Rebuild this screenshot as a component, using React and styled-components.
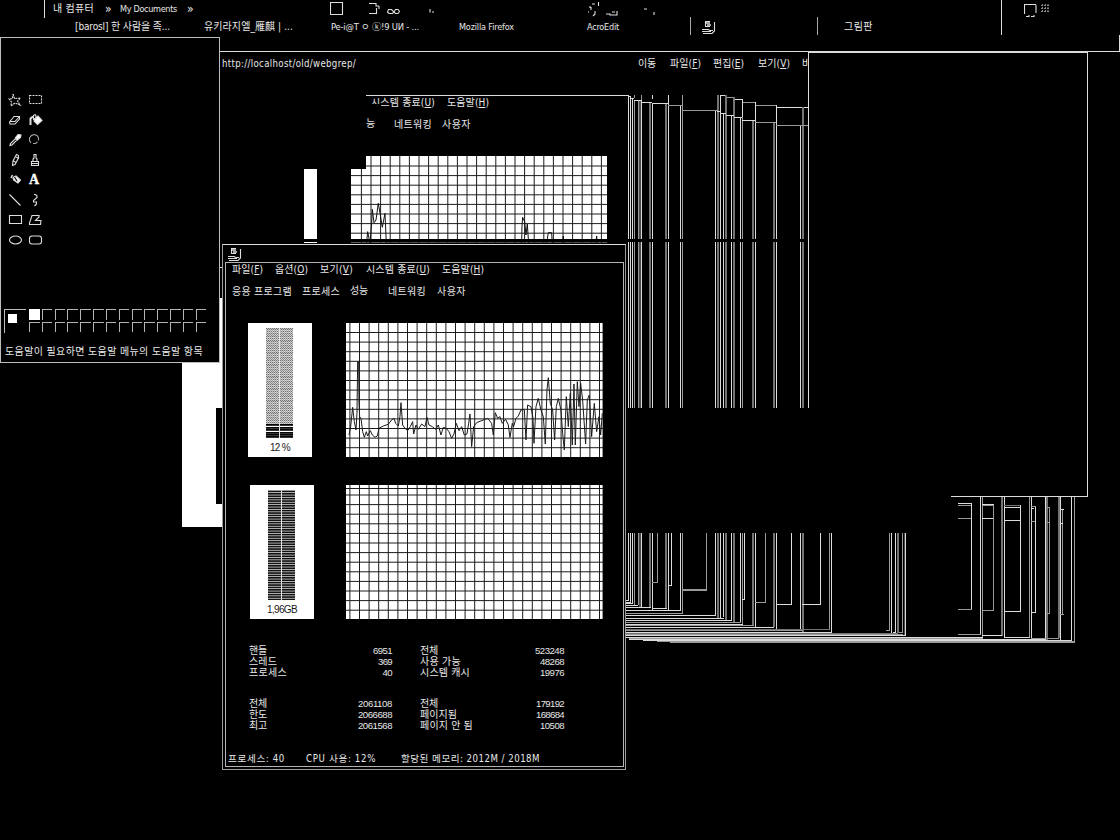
import React, { useLayoutEffect, useRef } from "react";
import styled, { createGlobalStyle } from "styled-components";

const LIGHT = "#dcdcdc";

const GlobalStyle = createGlobalStyle`
  html, body { margin: 0; background: #000; overflow: hidden; }
  * { box-sizing: border-box; }
`;

const Desktop = styled.main`
  position: relative;
  width: 1120px;
  height: 840px;
  overflow: hidden;
  background: #000;
  color: #e8e8e8;
  font-family: "DejaVu Sans Condensed", "DejaVu Sans", "Noto Sans CJK KR", sans-serif;
  font-size: 10px;
  line-height: 14px;
`;

const LabelBox = styled.span`
  display: block;
  flex: none;
  width: ${(p) => p.$w}px;
  height: 14px;
  margin-left: ${(p) => p.$gap || 0}px;
  white-space: pre;
  font-size: ${(p) => p.$size || 10}px;
  font-family: ${(p) => (p.$narrow ? '"Liberation Sans Narrow", "Liberation Sans", "Noto Sans CJK KR", sans-serif' : "inherit")};
  u { text-decoration: underline; text-underline-offset: 1px; text-decoration-thickness: 1px; }
`;

/* A caption that spreads its letters over a fixed width, like a bitmap face. */
function Label({ w, gap, size, narrow, children }) {
  const inner = useRef(null);
  useLayoutEffect(() => {
    const el = inner.current;
    el.style.letterSpacing = "0px";
    const natural = el.getBoundingClientRect().width;
    const count = Array.from(el.textContent).length;
    el.style.letterSpacing = `${(w - natural) / count}px`;
  });
  return (
    <LabelBox $w={w} $gap={gap} $size={size} $narrow={narrow}>
      <span ref={inner}>{children}</span>
    </LabelBox>
  );
}

const TopBar = styled.header`
  display: flex;
  height: 35px;
`;
const BarColumn = styled.div`
  width: ${(p) => p.$w}px;
  height: 35px;
  border-left: ${(p) => (p.$line ? `1px solid ${LIGHT}` : "0")};
`;
const BarRow = styled.div`
  display: flex;
  align-items: flex-start;
  height: ${(p) => p.$h || 18}px;
  padding: ${(p) => p.$top || 0}px 0 0 ${(p) => p.$left || 0}px;
`;
const Divider = styled.i`
  display: block;
  flex: none;
  width: 1px;
  height: ${(p) => p.$h}px;
  margin-left: ${(p) => p.$gap || 0}px;
  background: ${(p) => p.$c || "#a8a8a8"};
`;
const Icon = styled.svg`
  display: block;
  flex: none;
  width: ${(p) => p.$w}px;
  height: ${(p) => p.$h}px;
  margin-left: ${(p) => p.$gap || 0}px;
  fill: none;
  stroke: #dedede;
  stroke-width: 1.1;
`;

const Trails = styled.svg`
  position: absolute;
  inset: 0;
  width: 1120px;
  height: 840px;
`;

const Frame = styled.section`
  position: absolute;
  left: ${(p) => p.$x}px;
  top: ${(p) => p.$y}px;
  width: ${(p) => p.$w}px;
  height: ${(p) => p.$h}px;
`;
const Browser = styled(Frame)`
  border-top: 1px solid ${LIGHT};
`;
const AddressRow = styled.div`
  display: flex;
  padding: 5px 0 0 2px;
`;
const BlankWindow = styled(Frame)`
  background: #000;
  border: solid ${LIGHT};
  border-width: 1px 1px 0 1px;
`;
const PaintWindow = styled(Frame)`
  display: flex;
  flex-direction: column;
  background: #000;
  border: 1px solid #bdbdbd;
`;
const Toolbox = styled.div`
  display: grid;
  grid-template-columns: repeat(2, 20px);
  grid-auto-rows: 20px;
  padding: 52px 0 0 4px;
  height: 271px;
`;
const Palette = styled.div`
  display: flex;
  height: 36px;
  padding-left: 3px;
`;
const Current = styled.div`
  width: 22px;
  height: 24px;
  margin-right: 3px;
  padding: 4px 0 0 3px;
  border: solid #bdbdbd;
  border-width: 1px 0 0 1px;
  &::before { content: ""; display: block; width: 9px; height: 9px; background: #fff; }
`;
const Swatches = styled.div`
  display: grid;
  grid-template-columns: repeat(14, 12.83px);
  grid-auto-rows: 12.5px;
`;
const Swatch = styled.i`
  width: 10.5px;
  height: 10.5px;
  background: ${(p) => (p.$on ? "#fff" : "transparent")};
  border: solid ${(p) => (p.$on ? "#fff" : "#b4b4b4")};
  border-width: 1px 0 0 1px;
`;
const HelpLine = styled.div`
  padding-left: 4px;
`;

const BackMonitor = styled(Frame)`
  border-top: 1px solid ${LIGHT};
`;
const BackMenu = styled.div`
  position: relative;
  display: flex;
  padding: 0 0 0 5px;
  &::before { content: ""; position: absolute; left: 0; top: 8px; width: 15px; height: 8px; background: #000; }
`;
const BackTabs = styled.div`
  display: flex;
  padding: 8px 0 0 0;
`;
const BackPanel = styled(Frame)`
  overflow: hidden;
`;

const Monitor = styled(Frame)`
  background: #000;
  border: 1px solid #9c9c9c;
  border-top-color: ${LIGHT};
  padding: 0 1px 2px 2px;
`;
const TitleBar = styled.div`
  height: 17px;
  padding: 3px 0 0 3px;
`;
const MonitorBody = styled.div`
  display: flex;
  flex-direction: column;
  height: 505px;
  border: 1px solid #b4b4b4;
`;
const MenuRow = styled.div`
  display: flex;
  padding: 0 0 0 6px;
`;
const TabRow = styled.div`
  display: flex;
  padding: 8px 0 0 6px;
`;
const Raised = styled.div`
  margin-top: -1px;
`;
const Row = styled.div`
  display: flex;
  align-items: flex-start;
  padding-left: ${(p) => p.$left}px;
  margin-top: ${(p) => p.$top}px;
`;
const Meter = styled.div`
  display: flex;
  flex-direction: column;
  align-items: center;
  width: 64px;
  height: 134px;
  padding-top: 5px;
  margin-right: ${(p) => p.$after}px;
  background: #fff;
  color: #1a1a1a;
`;
const MeterText = styled.div`
  margin-top: 3px;
`;
const Stats = styled.div`
  display: grid;
  grid-template-columns: 103px 40px 28px 102px 42px;
  grid-auto-rows: 11px;
  margin: ${(p) => p.$top}px 0 0 23px;
`;
const Cell = styled.div`
  display: flex;
  justify-content: ${(p) => (p.$end ? "flex-end" : "flex-start")};
  grid-column: ${(p) => p.$col};
  height: 11px;
`;
const StatusBar = styled.footer`
  display: flex;
  margin-top: 22px;
  padding-left: 2px;
`;

const h = (x1, x2, y, s = 1) => [x1, y, x2 - x1, 1, s];
const v = (x, y1, y2, s = 1) => [x, y1, s === 2 ? 2 : 1, y2 - y1, s];
const SHADE = { 0: "#4a4a4a", 1: LIGHT, 2: "#747474", 3: "#9a9a9a" };

/* x, top, bottom, shade of the long window edges */
const EDGES = [
  [628, 95, 600, 1], [630, 96, 602, 1], [632, 98, 604, 1], [634, 100, 605, 3],
  [638, 100, 605, 3], [639, 100, 607, 0], [640, 100, 607, 0], [641, 100, 607, 1],
  [649, 102, 607, 2], [652, 103, 611, 1], [665, 103, 608, 2], [668, 103, 611, 1],
  [680, 105, 611, 1], [682, 105, 613, 3], [715, 110, 615, 1], [717, 111, 618, 2],
  [720, 112, 619, 1], [723, 113, 617, 1], [725, 113, 620, 2], [731, 115, 620, 1],
  [733, 115, 622, 2], [740, 117, 622, 1], [742, 117, 625, 3], [752, 120, 625, 2],
  [755, 120, 627, 1], [773, 122, 627, 2], [776, 122, 630, 1], [800, 125, 630, 1],
  [802, 125, 632, 2],
];
const SEGMENTS = [
  ...EDGES.flatMap(([x, a, b, s]) => [v(x, a, 239, s), v(x, 242, 408, s), v(x, 533, b, s)]),
  v(634, 95, 98, 3), v(641, 95, 100, 3), v(652, 95, 99), v(668, 95, 103), v(682, 95, 105, 3), v(717, 95, 111, 2),
  h(628, 631, 96), h(630, 634, 98), h(634, 641, 100), h(641, 652, 102), h(652, 668, 103), h(668, 683, 105, 3),
  h(683, 718, 110, 3), h(717, 720, 111), h(720, 726, 113), h(726, 734, 115), h(734, 742, 117), h(742, 755, 120),
  h(755, 776, 122, 3), h(776, 808, 125, 3),
  h(720, 726, 95), v(720, 95, 112), h(726, 734, 97, 3), v(725, 95, 113, 2), h(734, 742, 99), v(733, 97, 115, 2),
  h(742, 755, 102, 3), v(742, 99, 117), h(755, 776, 105, 3), v(755, 102, 120), h(776, 808, 107), v(776, 105, 122),
  v(802, 107, 125, 2),
  v(657, 533, 583, 3), h(652, 658, 582, 3), v(671, 533, 585), h(668, 672, 585), v(706, 533, 590, 3), h(682, 707, 589, 3), h(682, 707, 590, 3),
  v(744, 533, 600), h(742, 745, 599), v(765, 533, 602, 3), h(755, 766, 602, 3), v(791, 533, 605), h(776, 792, 604),
  v(820, 533, 605), h(802, 821, 604), v(829, 533, 630, 3), v(831, 533, 632),
  h(626, 629, 600), h(626, 631, 602), h(626, 633, 603), h(626, 638, 605), h(626, 651, 607), h(652, 667, 608), h(626, 681, 610),
  h(626, 683, 613, 3), h(626, 716, 615), h(626, 724, 618), h(626, 732, 620), h(626, 741, 622, 3), h(626, 743, 624),
  h(626, 754, 625, 3), h(626, 774, 627), h(626, 803, 630, 3), h(626, 830, 629, 2), h(626, 832, 632),
  h(626, 898, 633, 2), h(626, 903, 634, 3), h(626, 906, 635), h(626, 983, 637), h(629, 983, 638, 3),
  h(629, 1048, 639), h(643, 1061, 640), h(657, 1075, 641, 3), h(670, 1075, 642, 3),
  v(889, 533, 631, 3), h(886, 890, 630, 3), v(891, 533, 633), v(895, 533, 632), h(893, 896, 632), v(897, 533, 633, 2), v(902, 533, 633, 3), h(899, 903, 632, 3), v(904, 533, 635, 0), v(905, 533, 635),
  v(971, 503, 610), h(958, 972, 503), h(958, 971, 505, 3), h(958, 971, 518, 3), h(958, 972, 609, 3),
  v(980, 497, 635), h(958, 981, 634, 3), v(982, 497, 637, 3),
  v(993, 504, 611, 3), h(982, 994, 504), h(982, 993, 505, 3), h(982, 993, 518), h(982, 994, 610, 3),
  v(1001, 497, 636, 2), h(982, 1002, 635), v(1004, 497, 637),
  v(1020, 505, 612), h(1004, 1020, 505, 2), h(1004, 1020, 507), h(1004, 1020, 520), h(1004, 1021, 611),
  v(1029, 497, 637, 3), h(1004, 1030, 637), v(1031, 497, 640),
  v(1035, 506, 613), h(1031, 1036, 506, 3), h(1031, 1034, 508), h(1031, 1035, 521, 3), h(1031, 1036, 612),
  v(1045, 497, 638), h(1031, 1046, 638, 3), v(1046, 497, 640, 2),
  v(1049, 507, 614, 3), h(1047, 1050, 507, 3), h(1047, 1049, 522, 3), h(1047, 1050, 613, 3),
  v(1058, 497, 638, 2), h(1047, 1059, 638, 3), v(1060, 497, 641),
  v(1062, 509, 615, 3), h(1060, 1064, 509), h(1060, 1063, 523), h(1060, 1064, 614, 3),
  v(1071, 497, 641), h(1060, 1072, 640), v(1074, 497, 642, 3),
  h(951, 1088, 496), h(220, 223, 267), v(222, 267, 298, 3), v(1119, 35, 52),
];

const CPU = "372,375 377,350 383,292 388,335 393,360 396,310 398,155 401,155 402,280 404,320 408,325 413,365 418,382 424,365 428,378 436,362 442,375 450,382 457,378 462,355 475,348 490,343 500,330 507,325 512,340 520,348 525,320 528,278 533,345 540,355 548,362 556,350 563,335 566,372 573,345 580,358 590,342 600,350 606,322 612,345 622,350 632,358 640,345 648,375 655,352 664,355 672,365 680,385 687,372 694,340 702,362 710,350 718,375 726,372 731,340 735,312 740,410 746,350 755,338 775,330 788,325 800,340 805,375 811,308 818,325 825,320 832,340 842,328 850,345 855,382 862,340 866,350 873,325 880,318 888,300 898,298 903,390 908,285 918,290 924,325 927,400 933,290 940,265 948,300 955,320 961,402 966,240 970,203 976,280 983,300 989,390 994,290 1000,265 1008,300 1013,370 1018,420 1024,260 1030,350 1036,250 1042,405 1047,222 1051,405 1057,215 1062,290 1067,220 1073,270 1082,402 1087,270 1093,255 1100,380 1108,280 1115,365 1122,320 1127,375 1132,310";
const BACK = "440,490 443,455 450,490 455,430 457,388 462,428 468,420 475,370 481,405 487,442 495,400 499,490 905,490 906,440 908,412 914,425 918,465 922,432 926,490 980,490 985,458 995,458 997,490 1028,490 1030,468 1032,490 1128,490 1130,468 1132,490";

function Grid({ w, hgt, x0, y0, extra }) {
  const cols = [];
  for (let x = x0; x < w; x += 9.6) cols.push(x);
  const rows = extra ? [extra] : [];
  for (let y = y0; y < hgt; y += 9.6) rows.push(y);
  return (
    <g stroke="#1c1c1c" strokeWidth="1">
      {cols.map((x) => <path key={`c${x}`} d={`M${x} 0V${hgt}`} />)}
      {rows.map((y) => <path key={`r${y}`} d={`M0 ${y}H${w}`} />)}
    </g>
  );
}

const Chart = styled.svg`
  display: block;
  flex: none;
  width: ${(p) => p.$w}px;
  height: ${(p) => p.$h}px;
`;

function Bars({ load }) {
  const rows = [];
  for (let y = 0; y < 109; y += 2.4) rows.push(y);
  return (
    <Chart $w={28} $h={110} viewBox="0 0 28 110">
      {load ? (
        <>
          <defs>
            <pattern id="dither" width="2" height="2" patternUnits="userSpaceOnUse">
              <rect width="2" height="2" fill="#c6c6c6" />
              <rect width="1" height="1" fill="#6f6f6f" />
              <rect x="1" y="1" width="1" height="1" fill="#6f6f6f" />
            </pattern>
          </defs>
          <rect width="27" height="96" fill="url(#dither)" />
          {rows.filter((y) => y < 94).map((y) => <rect key={y} y={y + 2} width="27" height=".4" fill="#fff" />)}
          {[96, 99, 101, 104, 106, 108].map((y) => <rect key={y} y={y} width="27" height="1.8" fill="#050505" />)}
        </>
      ) : (
        <>
          <rect width="27" height="109" fill="#efefef" />
          {rows.map((y) => <rect key={y} y={y + 0.6} width="27" height="1.7" fill="#121212" />)}
        </>
      )}
      <rect x="13" width="1" height="110" fill="#e4e4e4" />
    </Chart>
  );
}

const ComputerIcon = () => (
  <Icon $w={14} $h={14} viewBox="0 0 14 14">
    <path d="M3 .5H8M3 5.5H8M0 8.5H6L8 9.5H11M0 10.5H9M1 12.5H10L12.5 10V1M3.5 1V5" />
    <path d="M4 2H8M5 4H9" strokeWidth="1.5" />
  </Icon>
);

const TOOLS = [
  <path key="a" strokeDasharray="2 .8" d="M8 4L9.500 8.500L15.500 8L12.500 11L15 15L10 13L6 16L6.500 12L4 9L7.500 8.500Z" />,
  <path key="b" strokeDasharray="2 1" d="M4.500 5.500H16.500V13.500H4.500Z" />,
  <path key="c" d="M4.500 12L9 6.500H14.500V9L10 14H5ZM5 11.500H10L14 7" />,
  <g key="d"><path fill="#fff" d="M9.500 9L13 6L17 10.500L12.500 14.500L9 11Z" /><path strokeWidth="2" d="M5.500 15V8.500L8 6.500" /><path d="M8.500 10V5.500L10 4.500L11 6V9" /></g>,
  <g key="e"><path d="M5 15.500L5.500 13.500L10.500 8.500L12 10L7 15Z" /><path fill="#fff" d="M10.500 7.500L13 4.500L16 5L15.500 7.500L12.500 10Z" /></g>,
  <path key="f" stroke="#a8a8a8" d="M6 13L4.500 10.500V8L6.500 5.500L9 4.500L12 5.500L13.500 8V10.500M12.500 12L10.500 13.500H8" />,
  <path key="g" d="M7.500 15.500L8 11L11.500 4.500L13.500 5.500V8L10 14.500ZM8.500 11L11 12.500M11 7L13 8" />,
  <path key="h" d="M6.500 15.500V11.500H13.500V15.500ZM8 11V9L9 8V4.500H11V8L12 9V11M7 13.500H13" />,
  <g key="i"><path fill="#eee" d="M8 7.500L11 6L15.500 10L13 13L8.500 10Z" /><path strokeWidth="1.600" d="M7.500 5L6 8" /><path stroke="#000" d="M9.500 7L12 11" /></g>,
  null,
  <path key="k" d="M4.500 4.500L15.500 15.500" />,
  <path key="l" d="M9 4.500H10.500L12 6V7.500L8.500 10.500V12H11.500V14L9.500 16" />,
  <path key="m" d="M4.500 5.500H16.500V13.500H4.500Z" />,
  <path key="n" d="M7 5.500H14V7L10.500 10.500H16L15.500 14.500H4.500V13Z" />,
  <ellipse key="o" cx="10.500" cy="10" rx="6" ry="4" />,
  <rect key="p" x="4.500" y="6" width="12" height="8" rx="2.500" />,
];

const ToolLetter = styled.span`
  font: bold 14px/20px "Liberation Serif", serif;
  padding-left: 4px;
  color: #fff;
  -webkit-text-stroke: 0.4px #fff;
`;

const STATS = [
  [["핸들", 18, "6951", 19, "전체", 18, "523248", 29], ["스레드", 28, "369", 14, "사용 가능", 41, "48268", 24], ["프로세스", 38, "40", 9.5, "시스템 캐시", 50, "19976", 24]],
  [["전체", 18, "2061108", 34, "전체", 18, "179192", 28], ["한도", 18, "2066688", 34, "페이지됨", 37, "168684", 28], ["최고", 18, "2061568", 34, "페이지 안 됨", 53, "10508", 24]],
];

export default function App() {
  return (
    <>
      <GlobalStyle />
      <Desktop>
        <Trails viewBox="0 0 1120 840" shapeRendering="crispEdges">
          <path fill="#fff" d="M182 298H223V527H182ZM216 408V504H223V408Z" fillRule="evenodd" />
          {SEGMENTS.map(([x, y, w, hh, s], i) => <rect key={i} x={x} y={y} width={w} height={hh} fill={SHADE[s]} />)}
        </Trails>

        <TopBar>
          <BarColumn $w={1001}>
            <BarRow $h={17}>
              <Divider $h={18} $gap={44} $c={LIGHT} />
              <BarRow $top={2} $left={8}>
                <Label w={41}>내 컴퓨터</Label>
                <Label w={8} gap={11} size={12}>»</Label>
                <Label w={57} gap={7} size={9}>My Documents</Label>
                <Label w={8} gap={10} size={12}>»</Label>
              </BarRow>
              <Icon $w={14} $h={17} $gap={135} viewBox="0 0 14 17"><path d="M.5 2.500H12.500V14.500H.5Z" /></Icon>
              <Icon $w={32} $h={17} $gap={25} viewBox="0 0 32 17">
                <path d="M0 3.500H7V6H10M7.500 8V13.500H0M10 6V9" />
                <path d="M19.500 9.500H22.500L25 12L23.500 13.500H20L18.500 12ZM25 12L26.500 9.500H29L30.500 11.500L29 13.500H26.500Z" />
              </Icon>
              <Icon $w={6} $h={17} $gap={28} viewBox="0 0 6 17"><path d="M1 9V12.500M3 12H5" /></Icon>
              <Icon $w={72} $h={17} $gap={153} viewBox="0 0 72 17">
                <path d="M10.500 2V6M4 4H7M3 7V10M0 11V13M7 11V14L5 16M18 14H22V15H29V11M24 12H27M56 9H59M66 12V15M2 6V8" />
              </Icon>
            </BarRow>
            <BarRow $h={18}>
              <BarRow $left={75} $top={3}>
                <Label w={95}>[barosl] 한 사람을 족...</Label>
                <Label w={89} gap={34}>유키라지엘_雁麒 | ...</Label>
                <Label w={88} gap={38} size={9.4}>Pe-i@T ㅇ ⓚ!9 UИ - ...</Label>
                <Label w={55} gap={40} size={9}>Mozilla Firefox</Label>
                <Label w={32} gap={73} size={9}>AcroEdit</Label>
              </BarRow>
              <Divider $h={18} $gap={71} />
              <BarRow $top={4} $left={11}><ComputerIcon /></BarRow>
              <Divider $h={18} $gap={101} />
              <BarRow $left={26} $top={3}><Label w={29}>그림판</Label></BarRow>
            </BarRow>
          </BarColumn>
          <BarColumn $w={119} $line>
            <BarRow $top={4} $left={22}>
              <Icon $w={14} $h={14} viewBox="0 0 14 14"><path d="M12 .5H.5V10M2 12.500H5V11M7 12.500H10V11M12 1V9" /></Icon>
              <Icon $w={9} $h={9} $gap={2} viewBox="0 0 9 9"><path stroke="#888" strokeDasharray="2 1" d="M1 1.500H9M1 4.500H9M1 7.500H9M2.500 0V9M5.500 0V9M8 0V9" /></Icon>
            </BarRow>
          </BarColumn>
        </TopBar>

        <Browser $x={220} $y={51} $w={900} $h={30}>
          <AddressRow>
            <Label w={134} size={9.6}>http://localhost/old/webgrep/</Label>
            <Label w={18} gap={282}>이동</Label>
            <Label w={31} gap={14}>파일(<u>F</u>)</Label>
            <Label w={31} gap={12}>편집(<u>E</u>)</Label>
            <Label w={32} gap={14}>보기(<u>V</u>)</Label>
            <Label w={9} gap={12}>바</Label>
          </AddressRow>
        </Browser>
        <BlankWindow $x={808} $y={52} $w={280} $h={356} />
        <Frame $x={1087} $y={408} $w={1} $h={89}><Divider $h={89} $c={LIGHT} /></Frame>

        <BackMonitor $x={366} $y={95} $w={263} $h={50}>
          <BackMenu>
            <Label w={64}>시스템 종료(<u>U</u>)</Label>
            <Label w={42} gap={12}>도움말(<u>H</u>)</Label>
          </BackMenu>
          <BackTabs>
            <Raised><Label w={8}>능</Label></Raised>
            <Label w={38} gap={20}>네트워킹</Label>
            <Label w={29} gap={10}>사용자</Label>
          </BackTabs>
        </BackMonitor>
        <BackPanel $x={304} $y={156} $w={304} $h={87}>
          <Chart $w={304} $h={87} viewBox="0 0 304 87">
            <clipPath id="panel"><path d="M47 13H62V0H303V83H47ZM47 86H303V87H47Z" /></clipPath>
            <path fill="#fff" d="M0 13H13V83H0ZM0 86H13V87H0Z" />
            <g clipPath="url(#panel)">
              <rect x="47" width="256" height="87" fill="#fff" />
              <g transform="translate(47 0)"><Grid w={256} hgt={87} x0={10.4} y0={10} /></g>
              <polyline points={BACK} transform="translate(-84 -76) scale(.3333)" fill="none" stroke="#111" strokeWidth="3" />
            </g>
          </Chart>
        </BackPanel>

        <PaintWindow $x={0} $y={37} $w={220} $h={326}>
          <Toolbox>
            {TOOLS.map((t, i) => t
              ? <Icon key={i} $w={20} $h={20} viewBox="0 0 20 20">{t}</Icon>
              : <ToolLetter key={i}>A</ToolLetter>)}
          </Toolbox>
          <Palette>
            <Current />
            <Swatches>
              {Array.from({ length: 28 }, (_, i) => <Swatch key={i} $on={i === 0} />)}
            </Swatches>
          </Palette>
          <HelpLine><Label w={198}>도움말이 필요하면 도움말 메뉴의 도움말 항목</Label></HelpLine>
        </PaintWindow>

        <Monitor $x={222} $y={244} $w={404} $h={526}>
          <TitleBar><ComputerIcon /></TitleBar>
          <MonitorBody>
            <MenuRow>
              <Label w={31}>파일(<u>F</u>)</Label>
              <Label w={33} gap={12}>옵션(<u>O</u>)</Label>
              <Label w={33} gap={12}>보기(<u>V</u>)</Label>
              <Label w={64} gap={13}>시스템 종료(<u>U</u>)</Label>
              <Label w={42} gap={12}>도움말(<u>H</u>)</Label>
            </MenuRow>
            <TabRow>
              <Label w={60}>응용 프로그램</Label>
              <Label w={38} gap={10}>프로세스</Label>
              <Raised><Label w={18} gap={10}>성능</Label></Raised>
              <Label w={38} gap={20}>네트워킹</Label>
              <Label w={29} gap={11}>사용자</Label>
            </TabRow>
            <Row $left={22} $top={24}>
              <Meter $after={34}>
                <Bars load />
                <MeterText><Label w={20} narrow size={10}>12 %</Label></MeterText>
              </Meter>
              <Chart $w={257} $h={134} viewBox="0 0 257 134">
                <rect width="256.600" height="134" fill="#fff" />
                <Grid w={257} hgt={134} x0={3.9} y0={9.5} />
                <polyline points={CPU} transform="translate(-121 -13) scale(.3333)" fill="none" stroke="#1a1a1a" strokeWidth="3" />
              </Chart>
            </Row>
            <Row $left={24} $top={28}>
              <Meter $after={32}>
                <Bars />
                <MeterText><Label w={30} narrow size={10}>1,96GB</Label></MeterText>
              </Meter>
              <Chart $w={257} $h={134} viewBox="0 0 257 134">
                <rect width="256.600" height="134" fill="#fff" />
                <Grid w={257} hgt={134} x0={3.9} y0={10} extra={3.5} />
              </Chart>
            </Row>
            {STATS.map((group, g) => (
              <Stats key={g} $top={g ? 20 : 25}>
                {group.map(([a, aw, b, bw, c, cw, d, dw]) => (
                  <React.Fragment key={a}>
                    <Cell $col={1}><Label w={aw} narrow>{a}</Label></Cell>
                    <Cell $col={2} $end><Label w={bw} narrow size={9.6}>{b}</Label></Cell>
                    <Cell $col={4}><Label w={cw} narrow>{c}</Label></Cell>
                    <Cell $col={5} $end><Label w={dw} narrow size={9.6}>{d}</Label></Cell>
                  </React.Fragment>
                ))}
              </Stats>
            ))}
            <StatusBar>
              <Label w={57} size={9.6}>프로세스: 40</Label>
              <Label w={70} gap={21} size={9.6}>CPU 사용: 12%</Label>
              <Label w={139} gap={25} size={9.6}>할당된 메모리: 2012M / 2018M</Label>
            </StatusBar>
          </MonitorBody>
        </Monitor>
      </Desktop>
    </>
  );
}
